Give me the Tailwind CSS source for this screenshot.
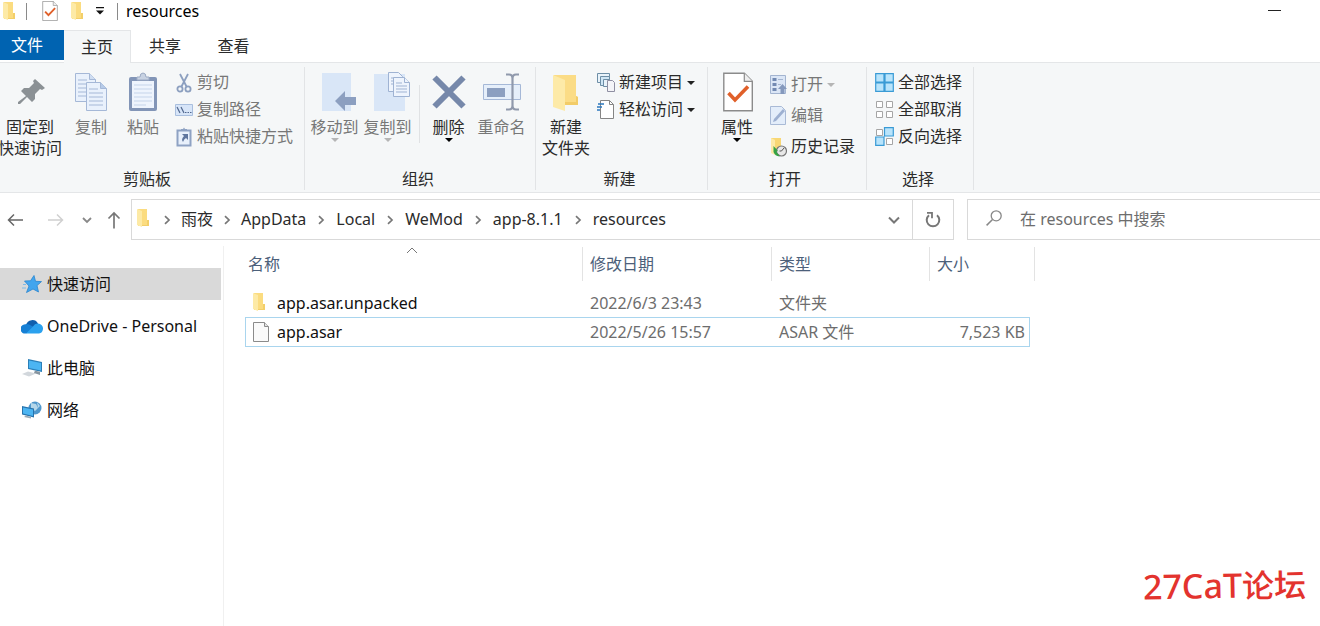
<!DOCTYPE html>
<html lang="zh-CN">
<head>
<meta charset="utf-8">
<meta name="viewport" content="width=device-width, initial-scale=1">
<title>resources</title>
<script src="https://cdn.jsdelivr.net/npm/@tailwindcss/browser@4"></script>
</head>
<body class="relative flex min-h-screen flex-col overflow-x-hidden bg-white font-['Noto_Sans','Noto_Sans_CJK_SC',sans-serif] text-base leading-[21px] text-[#2b2b2b]">

<svg class="hidden" aria-hidden="true">
  <symbol id="folder" viewBox="0 0 14 18"><path d="M2 0h9v11l2 1v5H2z" fill="#fbdc80"/><path d="M1 0l5 2v16l-5-2z" fill="#fdeaa6"/><path d="M11 11h2v6h-7v-1h5z" fill="#f3cf69"/></symbol>
  <symbol id="chev" viewBox="0 0 8 10"><path d="M2 1.200L6 5 2 8.800" fill="none" stroke="#777" stroke-width="1.700"/></symbol>
  <symbol id="caret" viewBox="0 0 8 4"><path d="M0 0h8L4 4z" fill="currentColor"/></symbol>
  <symbol id="checkdoc" viewBox="0 0 30 39"><path d="M.8.8h20.500l8 8v29.400H.8z" fill="#fff" stroke="#8b8b8b" stroke-width="1.400"/><path d="M21.300.8v8h8" fill="#eee" stroke="#8b8b8b" stroke-width="1.200"/><path d="M5.500 20.500l6.500 7L25 14" fill="none" stroke="#e0602a" stroke-width="3.600"/></symbol>
</svg>

<header class="flex h-[30px] items-center pb-2">
  <svg class="ml-0.5 h-[18px] w-3.5"><use href="#folder"/></svg>
  <span class="ml-2.5 h-[17px] w-px bg-[#8a8a8a]"></span>
  <button class="ml-[15px]" aria-label="属性"><svg class="h-5 w-4"><use href="#checkdoc"/></svg></button>
  <button class="ml-3" aria-label="新建文件夹"><svg class="h-[18px] w-3.5"><use href="#folder"/></svg></button>
  <button class="ml-3" aria-label="自定义快速访问工具栏"><svg class="h-2 w-2" viewBox="0 0 8 8"><path d="M0 0h8v1.200H0zM0 3.500h8L4 7.500z" fill="#111"/></svg></button>
  <span class="ml-[13px] h-[17px] w-px bg-[#8a8a8a]"></span>
  <h1 class="ml-2 text-black">resources</h1>
  <button class="ml-auto mr-[39px]" aria-label="最小化"><svg class="h-3 w-[13px]" viewBox="0 0 13 12"><path d="M0 5.500h13" stroke="#222"/></svg></button>
</header>

<nav class="flex h-[33px] items-start border-b border-[#e4e6e8]">
  <button class="h-[30px] w-16 bg-[#0063b1] pr-2.5 text-white">文件</button>
  <button class="-mb-px h-[33px] w-[67px] border-r border-t border-[#e4e6e8] bg-[#f5f7f8]">主页</button>
  <button class="h-8 w-[68px]">共享</button>
  <button class="h-8 w-[69px]">查看</button>
</nav>

<section class="flex border-b border-[#e4e6e8] bg-[#f5f7f8]" aria-label="主页">
  <div class="mb-0.5 mt-1 flex w-[305px] shrink-0 flex-col border-r border-[#e2e4e6]">
    <div class="flex h-[102px] items-start">
      <button class="-ml-0.5 mr-[3px] flex w-16 shrink-0 flex-col items-center gap-[5px] pt-[5px]">
        <svg class="ml-1 h-10 w-8" viewBox="0 0 32 40"><path d="M19 7l10 9-3 2-2-1-5 5v5l-3 3-5-5-7 7H2v-2l8-6-5-5 3-3h5l5-5-1-2z" fill="#8b9195"/></svg>
        <span>固定到<br>快速访问</span>
      </button>
      <button class="flex w-[52px] shrink-0 flex-col items-center gap-[5px] pt-[5px] text-[#777]">
        <svg class="h-10 w-8" viewBox="0 0 32 40"><g fill="#e9f1fc" stroke="#a5b8d7"><path d="M.5 1.500h14l6 6v22H.5z"/><path d="M14.500 1.500v6h6" fill="#d0def2"/><path d="M3 8h9M3 12h14M3 16h14M3 20h14M3 24h14"/><path d="M11.500 10.500h14l6 6v22h-20z"/><path d="M25.500 10.500v6h6" fill="#b7cbe8"/><path d="M14 17h9M14 21h14M14 25h14M14 29h14M14 33h14"/></g></svg>
        <span>复制</span>
      </button>
      <button class="flex w-[52px] shrink-0 flex-col items-center gap-[5px] pt-[5px] text-[#777]">
        <svg class="h-10 w-7" viewBox="0 0 28 40"><rect y="5" width="28" height="34" rx="2" fill="#8295b7"/><path d="M3 9h22v27H3z" fill="#eef4fd"/><path d="M5 13h18M5 17h18M5 21h18M5 25h18M5 29h18M5 33h12" stroke="#c5d4ea"/><path d="M8 8V5h3a3 4 0 0 1 6 0h3v3z" fill="#c8d2e2" stroke="#9dabc4"/></svg>
        <span>粘贴</span>
      </button>
      <div class="ml-1.5 flex flex-col pt-0.5 text-[#777]">
        <button class="flex h-[27px] items-center gap-1"><svg class="h-5 w-[18px]" viewBox="0 0 18 20"><g fill="none" stroke="#8c9fbf" stroke-width="1.800"><path d="M5 1l6.500 12.500M13 1L6.500 13.500"/><circle cx="5" cy="16" r="2.600"/><circle cx="13" cy="16" r="2.600"/></g></svg>剪切</button>
        <button class="flex h-[27px] items-center gap-1"><svg class="h-3 w-[18px]" viewBox="0 0 18 12"><path d="M.5.500h17v11H.5z" fill="#d7e5f8" stroke="#a9bfde"/><path d="M2 3l3 6M6 3l3 6M10 8.500h1.500M12.500 8.500H14M15 8.500h1.500" stroke="#52688f" stroke-width="1.200"/></svg>复制路径</button>
        <button class="flex h-[27px] items-center gap-1"><svg class="h-5 w-[18px]" viewBox="0 0 18 20"><path d="M2.500 3.500h13v15h-13z" fill="#e8f0fb" stroke="#8ea2c3" stroke-width="2"/><path d="M6 4V2h2l1-1.500L10 2h2v2z" fill="#8ea2c3"/><path d="M7 7h6v6l-2-2q-2 1-3 4l-1-2q0-2 2-4z" fill="#5f769e"/></svg>粘贴快捷方式</button>
      </div>
    </div>
    <div class="pr-2.5 text-center">剪贴板</div>
  </div>

  <div class="mb-0.5 mt-1 flex w-[231px] shrink-0 flex-col border-r border-[#e2e4e6]">
    <div class="flex h-[102px] items-start pl-[3px]">
      <button class="flex w-[53px] shrink-0 flex-col items-center pt-[5px] text-[#777]">
        <svg class="mb-[5px] ml-2 h-10 w-[34px]" viewBox="0 0 34 40"><path d="M0 1h29v38H0z" fill="#d9e6f7"/><path d="M34 25v8H23v6L13 29l10-10v6z" fill="#8c9fc0"/></svg>
        <span>移动到</span><svg class="h-1 w-2 text-[#b5b5b5]"><use href="#caret"/></svg>
      </button>
      <button class="flex w-[53px] shrink-0 flex-col items-center pt-[5px] text-[#777]">
        <svg class="mb-[5px] ml-2 h-10 w-9" viewBox="0 0 36 40"><path d="M0 2h31v37H0z" fill="#d9e6f7"/><g fill="#eef4fd" stroke="#9fb3d3"><path d="M14.500.5h10l4 4v15h-14z"/><path d="M17 6h7M17 9h7M17 12h7"/><path d="M19.500 5.500h11l5 5v14h-16z"/><path d="M30.500 5.500v5h5M22 11h6M22 14h11M22 17h11M22 20h11"/></g></svg>
        <span>复制到</span><svg class="h-1 w-2 text-[#b5b5b5]"><use href="#caret"/></svg>
      </button>
      <span class="ml-[5px] mr-0.5 mt-[18px] h-[58px] w-px bg-[#e0e2e4]"></span>
      <button class="flex w-[53px] shrink-0 flex-col items-center pt-[5px]">
        <svg class="mb-[5px] h-10 w-[34px]" viewBox="0 0 34 40"><path d="M2.500 5.500l29 29M31.500 5.500l-29 29" stroke="#7688aa" stroke-width="6"/></svg>
        <span>删除</span><svg class="h-1 w-2 text-black"><use href="#caret"/></svg>
      </button>
      <button class="flex w-[53px] shrink-0 flex-col items-center gap-[5px] pt-[5px] text-[#777]">
        <svg class="h-10 w-[38px]" viewBox="0 0 38 40"><path d="M.5 12.500h37v15H.5z" fill="#e6effa" stroke="#a5b8d7"/><path d="M4 16h18v9H4z" fill="#8c9fc0"/><path d="M23 2.500h3q3.500 0 3.500 4v27q0 4-3.500 4h-3M36 2.500h-3q-3.500 0-3.500 4v27q0 4 3.500 4h3" fill="none" stroke="#9099ac" stroke-width="2.200"/></svg>
        <span>重命名</span>
      </button>
    </div>
    <div class="pr-1 text-center">组织</div>
  </div>

  <div class="mb-0.5 mt-1 flex w-[172px] shrink-0 flex-col border-r border-[#e2e4e6]">
    <div class="flex h-[102px] items-start pl-1.5">
      <button class="flex w-12 shrink-0 flex-col items-center gap-[5px] pt-[5px]">
        <svg class="h-10 w-[26px]" viewBox="0 0 26 40"><path d="M1 3h22v21l2 1v8H1z" fill="#fbdc86"/><path d="M0 3l12 5v31L0 35z" fill="#fdeaa8"/><path d="M23 24l2 1v8H12v-3h11z" fill="#f2cc68"/></svg>
        <span>新建<br>文件夹</span>
      </button>
      <div class="ml-[7px] flex flex-col pt-0.5">
        <button class="flex h-[27px] items-center gap-1"><svg class="h-[19px] w-[18px]" viewBox="0 0 18 19"><g fill="#e9f3fa" stroke="#6d8ea6"><path d="M.5.500h12v9H.5z"/><path d="M3.500 3.500h9v9h-9z" fill="#cfe6f5"/><path d="M6.500 6.500h6v7h-6z"/><path d="M10.500 7.500h5l2 2v9h-7z" fill="#f4f4f8" stroke="#8f8fa2"/></g></svg>新建项目<svg class="h-1 w-2 text-[#222]"><use href="#caret"/></svg></button>
        <button class="flex h-[27px] items-center gap-1"><svg class="h-[19px] w-[18px]" viewBox="0 0 18 19"><path d="M3.500.5h9l4 4v14h-13z" fill="#fff" stroke="#858585"/><path d="M12.500.5v4h4" fill="none" stroke="#858585"/><path d="M1 4h6M0 7h5M0 10h3" stroke="#2d78bd" stroke-width="1.600"/></svg>轻松访问<svg class="h-1 w-2 text-[#222]"><use href="#caret"/></svg></button>
      </div>
    </div>
    <div class="pr-1 text-center">新建</div>
  </div>

  <div class="mb-0.5 mt-1 flex w-[159px] shrink-0 flex-col border-r border-[#e2e4e6]">
    <div class="flex h-[102px] items-start pl-[5px]">
      <button class="flex w-12 shrink-0 flex-col items-center pt-[5px]">
        <svg class="mb-[5px] ml-0.5 h-10 w-[30px]"><use href="#checkdoc"/></svg>
        <span>属性</span><svg class="h-1 w-2 text-black"><use href="#caret"/></svg>
      </button>
      <div class="ml-[9px] flex flex-col pt-0.5">
        <button class="flex h-[31px] items-center gap-1 text-[#777]"><svg class="h-5 w-[17px]" viewBox="0 0 17 20"><path d="M.5.500h15v18H.5z" fill="#dbe6f6" stroke="#a3b4d0"/><path d="M2.500 3h4v3h-4zM2.500 8h4v3h-4zM2.500 13h4v3h-4z" fill="#7289b2"/><path d="M8 4.500h5M8 9.500h3" stroke="#a3b4d0"/><path d="M12.500 9l4.500 5h-2.500v5h-4v-5H8z" fill="#8599bd"/></svg>打开<svg class="h-1 w-2 text-[#b5b5b5]"><use href="#caret"/></svg></button>
        <button class="flex h-[31px] items-center gap-1 text-[#777]"><svg class="h-5 w-[17px]" viewBox="0 0 17 20"><path d="M.5.500h11l4 4v14H.5z" fill="#e3edfa" stroke="#a9bad6"/><path d="M15 5L6 15l-3 1 1-3 9-10z" fill="#9db0d1"/></svg>编辑</button>
        <button class="flex h-[31px] items-center gap-1"><svg class="h-5 w-[17px]" viewBox="0 0 17 20"><path d="M1 1h10v13H1z" fill="#f8d775"/><path d="M1 1l4 2v15l-4-2z" fill="#fdeaa8"/><circle cx="11.500" cy="14" r="5" fill="#e8e8e8" stroke="#777" stroke-width="1.200"/><path d="M11.500 14l2.500-3M11.500 14h-2" stroke="#555"/><path d="M3.500 9v6q1.500 4 6 4.500l-1-2q-2-1-2-4l2 1z" fill="#35a344"/></svg>历史记录</button>
      </div>
    </div>
    <div class="pr-1 text-center">打开</div>
  </div>

  <div class="mb-0.5 mt-1 flex w-[107px] shrink-0 flex-col border-r border-[#e2e4e6]">
    <div class="flex h-[102px] flex-col items-start pl-2 pt-0.5">
      <button class="flex h-[27px] items-center gap-1"><svg class="h-[19px] w-[19px]" viewBox="0 0 19 19"><path d="M.7.700h8.300V9H.7zM10 .7h8.300V9H10zM.7 10H9v8.300H.7zM10 10h8.300v8.300H10z" fill="#b9e4fb" stroke="#3a9bd5" stroke-width="1.200"/></svg>全部选择</button>
      <button class="flex h-[27px] items-center gap-1"><svg class="h-[19px] w-[19px]" viewBox="0 0 19 19"><path d="M1.500 1.500h6v6h-6zM11.500 1.500h6v6h-6zM1.500 11.500h6v6h-6zM11.500 11.500h6v6h-6z" fill="#fff" stroke="#a5a5a5"/></svg>全部取消</button>
      <button class="flex h-[27px] items-center gap-1"><svg class="h-[19px] w-[19px]" viewBox="0 0 19 19"><path d="M1.500 2.500h6v6h-6zM11.500 11.500h6v6h-6z" fill="#fff" stroke="#a5a5a5"/><path d="M9.500.7h8.800V9H9.500zM.7 10H9v8.300H.7z" fill="#b9e4fb" stroke="#3a9bd5" stroke-width="1.200"/></svg>反向选择</button>
    </div>
    <div class="pr-1 text-center">选择</div>
  </div>
</section>

<div class="flex items-center py-1.5 pl-[7px]">
  <button aria-label="后退"><svg class="h-4 w-4" viewBox="0 0 16 16"><path d="M16 8H1.500M7 2.500L1.500 8 7 13.500" fill="none" stroke="#666" stroke-width="1.500"/></svg></button>
  <button class="ml-[25px]" aria-label="前进" disabled><svg class="h-4 w-4" viewBox="0 0 16 16"><path d="M0 8h14.500M9 2.500L14.500 8 9 13.500" fill="none" stroke="#d0d0d0" stroke-width="1.500"/></svg></button>
  <button class="ml-[18px]" aria-label="最近浏览的位置"><svg class="h-2 w-2.5" viewBox="0 0 10 8"><path d="M1 2l4 4 4-4" fill="none" stroke="#888" stroke-width="1.800"/></svg></button>
  <button class="ml-[15px] mr-[10px]" aria-label="向上"><svg class="h-[18px] w-[14px]" viewBox="0 0 14 18"><path d="M7 17.500V2M1.500 7.500L7 2l5.500 5.500" fill="none" stroke="#777" stroke-width="1.700"/></svg></button>
  <div class="flex h-[41px] min-w-0 flex-1 items-center border border-[#d9d9d9]">
    <svg class="mb-1 ml-1 mr-[3px] h-[18px] w-3.5"><use href="#folder"/></svg>
    <ol class="flex items-center whitespace-nowrap">
      <li class="flex items-center"><svg class="mx-2.5 h-2.5 w-2"><use href="#chev"/></svg><a href="#">雨夜</a></li>
      <li class="flex items-center"><svg class="mx-2.5 h-2.5 w-2"><use href="#chev"/></svg><a href="#">AppData</a></li>
      <li class="flex items-center"><svg class="mx-[11px] h-2.5 w-2"><use href="#chev"/></svg><a href="#">Local</a></li>
      <li class="flex items-center"><svg class="mx-[11px] h-2.5 w-2"><use href="#chev"/></svg><a href="#">WeMod</a></li>
      <li class="flex items-center"><svg class="mx-[11px] h-2.5 w-2"><use href="#chev"/></svg><a href="#">app-8.1.1</a></li>
      <li class="flex items-center"><svg class="mx-[11px] h-2.5 w-2"><use href="#chev"/></svg><a href="#">resources</a></li>
    </ol>
    <button class="ml-auto mr-3" aria-label="以前的位置"><svg class="h-2 w-3" viewBox="0 0 12 8"><path d="M1 1.500l5 5 5-5" fill="none" stroke="#777" stroke-width="2"/></svg></button>
    <button class="flex h-full w-[41px] items-center justify-center border-l border-[#d9d9d9]" aria-label="刷新"><svg class="h-[17px] w-4" viewBox="0 0 16 17"><path d="M4 4.200A6.300 6.300 0 1 0 12 4.200" fill="none" stroke="#777" stroke-width="2"/><path d="M2 1.800h5v5.500" fill="none" stroke="#777" stroke-width="1.800"/></svg></button>
  </div>
  <label class="ml-[13px] flex h-[41px] w-[353px] shrink-0 items-center border-y border-l border-[#d9d9d9] pl-[18px]">
    <svg class="mb-1 mr-[18px] h-4 w-4" viewBox="0 0 16 16"><circle cx="10.200" cy="5.800" r="5" fill="none" stroke="#888" stroke-width="1.300"/><path d="M6.500 9.500L.6 15.400" stroke="#888" stroke-width="1.500"/></svg>
    <input class="min-w-0 flex-1 outline-none placeholder:text-[#6d6d6d]" type="search" aria-label="搜索" placeholder="在 resources 中搜索">
  </label>
</div>

<main class="flex flex-1">
  <nav class="w-56 shrink-0 border-r border-[#f0f0f0] pt-[22px] text-[#111]">
    <ul class="flex flex-col gap-2.5">
      <li><a href="#" class="mr-0.5 flex h-8 items-center gap-1 bg-[#d9d9d9] pl-[21px]"><svg class="h-[18px] w-[22px]" viewBox="0 0 22 18"><path d="M13 .5l1.500 5.800 6 .3-4.500 4 1.500 6.400-5.500-3-6.500 3.500 2.500-6.500L3.500 6l6-.2z" fill="#42a5ee" stroke="#2a85cf" stroke-width=".8"/><path d="M2 9.500h3M1 13h4" stroke="#7dbbe8"/></svg>快速访问</a></li>
      <li><a href="#" class="flex h-8 items-center gap-1 pl-[21px]"><svg class="h-[15px] w-[22px]" viewBox="0 0 22 15"><path d="M5 6a6.500 6.500 0 0 1 12-1.500l-3 6H5z" fill="#0f5fae"/><path d="M3 5.500q4-1.500 7 1L16 10 5 14.500A4.500 4.500 0 0 1 3 5.500z" fill="#1680d5"/><path d="M12 7.500q2-3.500 5-3a5 5 0 0 1 5 5.500q-.5 4-4 4.500H5z" fill="#2ba1ee"/></svg>OneDrive - Personal</a></li>
      <li><a href="#" class="flex h-8 items-center gap-1 pl-[21px]"><svg class="h-[18px] w-[22px]" viewBox="0 0 22 18"><path d="M7 0l14 3v10L7 10z" fill="#2b7fb8"/><path d="M8 1.500l12 2.500v7.500L8 9z" fill="#4cb5f2"/><path d="M1 15l6-2.500 8 2-7 3z" fill="#d2d7dc"/><path d="M14 11.500l5 1.500v3l-6-2z" fill="#8795a0"/></svg>此电脑</a></li>
      <li><a href="#" class="flex h-8 items-center gap-1 pl-[21px]"><svg class="h-[18px] w-[22px]" viewBox="0 0 22 18"><circle cx="14" cy="7" r="6.500" fill="#4f97cc"/><path d="M10 2l5 1 2 4-3 3-4-3zM16 1l3 4-2 2z" fill="#b4d6e9"/><path d="M1 5l12 2.500v9L1 13.500z" fill="#2774ae"/><path d="M2 6.500l10 2v6.500L2 12.500z" fill="#4cb5f2"/><path d="M5 14.500l5 1.500v1.500l-7-1.500z" fill="#9aa9b5"/></svg>网络</a></li>
    </ul>
  </nav>

  <section class="min-w-0 flex-1 pl-[21px] pt-px">
    <table class="w-[790px] table-fixed border-separate border-spacing-0 text-left text-[#6d6d6d]">
      <colgroup><col class="w-[338px]"><col class="w-[189px]"><col class="w-[158px]"><col class="w-[100px]"><col class="w-[5px]"></colgroup>
      <thead class="text-[#4c607a]">
        <tr>
          <th class="relative p-0 pb-2 font-normal"><div class="flex h-[34px] items-center border-r border-[#e3e3e3] pl-[3px]">名称</div><svg class="absolute left-[161px] top-0 h-[7px] w-3" viewBox="0 0 12 7"><path d="M1 6l5-5 5 5" fill="none" stroke="#777"/></svg></th>
          <th class="p-0 pb-2 font-normal"><div class="flex h-[34px] items-center border-r border-[#e3e3e3] pl-[7px]">修改日期</div></th>
          <th class="p-0 pb-2 font-normal"><div class="flex h-[34px] items-center border-r border-[#e3e3e3] pl-[7px]">类型</div></th>
          <th colspan="2" class="p-0 pb-2 font-normal"><div class="flex h-[34px] items-center border-r border-[#e3e3e3] pl-[7px]">大小</div></th>
        </tr>
      </thead>
      <tbody>
        <tr class="h-7">
          <td class="p-0 pl-[7px]"><a href="#" class="flex items-center gap-[11px] text-[#111]"><svg class="mb-0.5 h-[18px] w-3.5"><use href="#folder"/></svg>app.asar.unpacked</a></td>
          <td class="p-0 pl-[7px]">2022/6/3 23:43</td>
          <td class="p-0 pl-[7px]">文件夹</td>
          <td class="p-0"></td>
          <td class="p-0"></td>
        </tr>
        <tr class="h-[30px]">
          <td class="border-y border-l border-[#a9d5ee] p-0 pl-[7px]"><a href="#" class="flex items-center gap-2 text-[#111]"><svg class="h-5 w-4" viewBox="0 0 16 20"><path d="M.5.500h11l4 4v15H.5z" fill="#fafafa" stroke="#8b8b8b"/><path d="M11.500.5v4h4" fill="#e4e4e4" stroke="#8b8b8b"/></svg>app.asar</a></td>
          <td class="border-y border-[#a9d5ee] p-0 pl-[7px]">2022/5/26 15:57</td>
          <td class="border-y border-[#a9d5ee] p-0 pl-[7px]">ASAR 文件</td>
          <td class="border-y border-r border-[#a9d5ee] p-0 pr-1 text-right">7,523 KB</td>
          <td class="p-0"></td>
        </tr>
      </tbody>
    </table>
  </section>
</main>

<div class="absolute bottom-5 right-3.5 -rotate-1 text-[32px] font-medium leading-10 text-[#e3332e]"><span class="text-[34px]">27CaT</span>论坛</div>
</body>
</html>
